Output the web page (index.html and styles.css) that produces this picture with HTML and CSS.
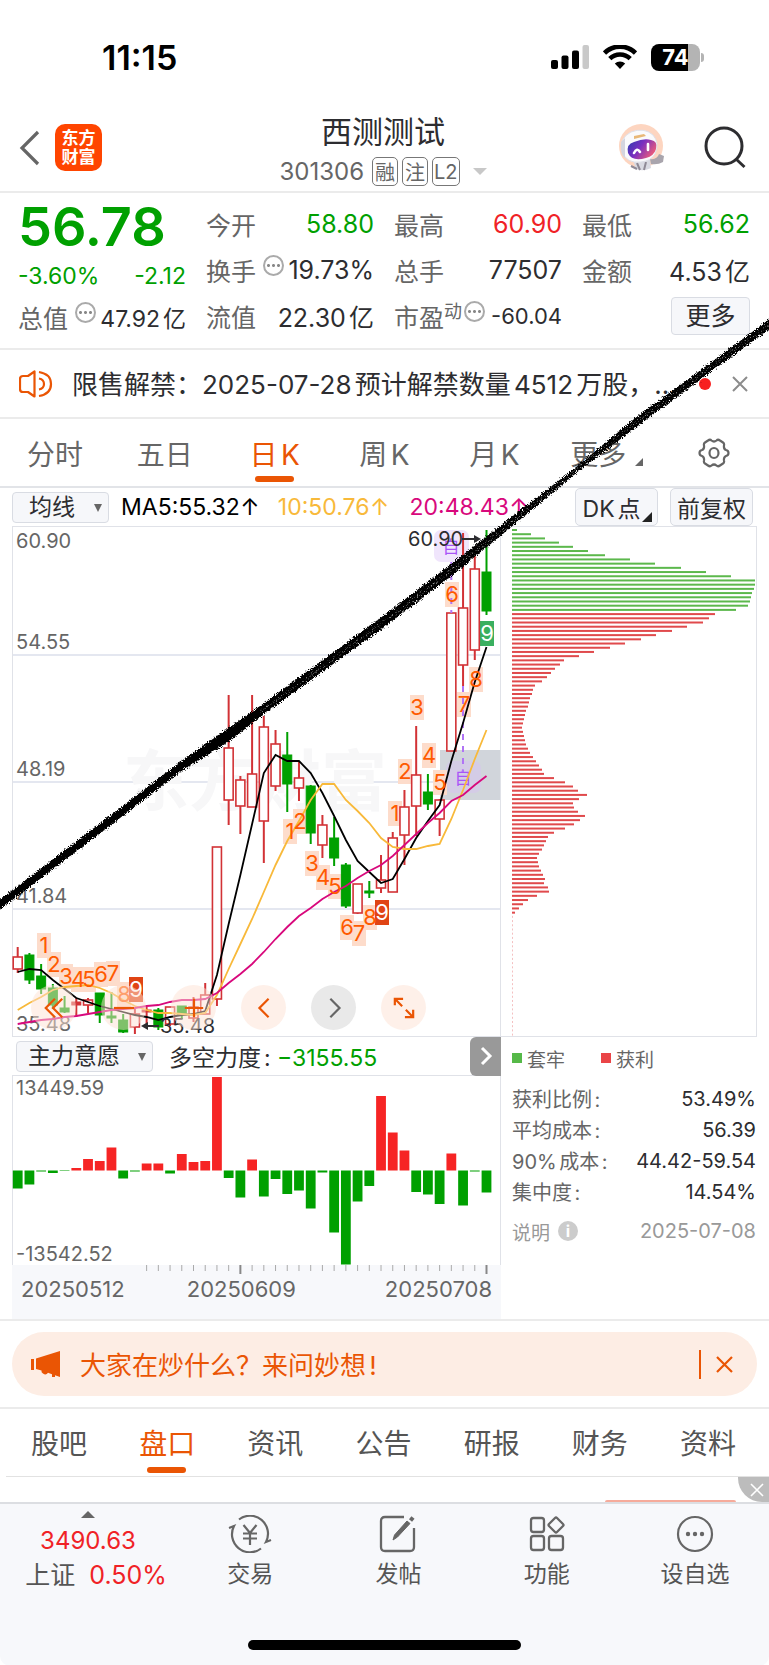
FILE: index.html
```html
<!DOCTYPE html>
<html lang="zh-CN">
<head>
<meta charset="utf-8">
<meta name="viewport" content="width=device-width, initial-scale=1">
<title>西测测试 301306</title>
<link rel="stylesheet" href="styles.css">
</head>
<body>
<div class="page">

  <div class="status">
    <span class="status-time">11:15</span>
    <div class="status-icons">
      <svg width="38" height="24" viewBox="0 0 38 24"><rect x="0" y="15" width="7" height="9" rx="2"/><rect x="10.500" y="10.500" width="7" height="13.500" rx="2"/><rect x="21" y="5.500" width="7" height="18.500" rx="2"/><rect x="31.500" y="0" width="6.500" height="24" rx="2" fill="#c9c9c9"/></svg>
      <svg width="34" height="24" viewBox="0 0 34 24"><path d="M17 24 11.800 18.500a7.500 7.500 0 0 1 10.400 0z"/><path d="M6.800 13.600a14.600 14.600 0 0 1 20.400 0M1.500 8a22 22 0 0 1 31 0" fill="none" stroke="#000" stroke-width="4.600"/></svg>
      <span class="battery"><b>74</b></span>
    </div>
  </div>

  <header class="header">
    <div class="header-left">
      <button class="icon-btn" aria-label="返回"><svg width="22" height="36" viewBox="0 0 22 36"><path d="M19 2 3 18l16 16" fill="none" stroke="#666" stroke-width="3.200"/></svg></button>
      <div class="logo"><span>东方</span><span>财富</span></div>
    </div>
    <div class="header-title">
      <h1>西测测试</h1>
      <div class="code"><span class="code-num">301306</span><i>融</i><i>注</i><i>L2</i><span class="caret"></span></div>
    </div>
    <div class="header-right">
      <svg width="46" height="48" viewBox="0 0 46 48">
        <defs><linearGradient id="visor" x1="0" y1="0" x2="1" y2=".5"><stop offset="0" stop-color="#2b3bb0"/><stop offset=".5" stop-color="#7a2fc0"/><stop offset="1" stop-color="#e85a7c"/></linearGradient></defs>
        <circle cx="22" cy="22" r="22" fill="#fdd5c0"/>
        <path d="M14 36q9-4 17 0l1 8q-8 4-15 1z" fill="#d9dae2"/>
        <path d="M18 39l3 7M27 38l-2 8M12 42l6 3" stroke="#8f8a96" stroke-width="2"/>
        <path d="M31 35q7 1 9-5l5 2-1 6q-5 3-12 2z" fill="#a9a5ad"/>
        <path d="M3 27Q0 14 12 8 25 3 34 11q7 8 2 19-4 7-14 8Q7 40 3 27z" fill="#fafafc" stroke="#dfe0e8"/>
        <path d="M2 18l4-4v20q-5-3-4-16z" fill="#d4d5df"/>
        <path d="M15 12l10-2 2 2-12 3z" fill="#e8b878"/>
        <path d="M9 29q-2-9 6-11 10-4 17-2 7 1 5 9-2 7-10 9-14 4-18-5z" fill="url(#visor)"/>
        <path d="M15 29q3-6 6-1M29 20v6" fill="none" stroke="#fff" stroke-width="2.600" stroke-linecap="round"/>
      </svg>
      <button class="icon-btn" aria-label="搜索"><svg width="44" height="44" viewBox="0 0 44 44"><circle cx="21" cy="20" r="18" fill="none" stroke="#2d2d30" stroke-width="3"/><path d="M33 33l8.500 8" stroke="#2d2d30" stroke-width="3"/></svg></button>
    </div>
  </header>

  <section class="quote">
    <div class="quote-col quote-main">
      <div class="price">56.78</div>
      <div class="row green change"><span>-3.60%</span><span>-2.12</span></div>
      <div class="row"><span class="lbl">总值</span><span class="dots"></span><span class="val">47.92亿</span></div>
    </div>
    <div class="quote-col">
      <div class="row"><span class="lbl">今开</span><span class="val green">58.80</span></div>
      <div class="row"><span class="lbl">换手</span><span class="dots"></span><span class="val">19.73%</span></div>
      <div class="row"><span class="lbl">流值</span><span class="val">22.30亿</span></div>
    </div>
    <div class="quote-col">
      <div class="row"><span class="lbl">最高</span><span class="val red">60.90</span></div>
      <div class="row"><span class="lbl">总手</span><span class="val">77507</span></div>
      <div class="row"><span class="lbl">市盈<sup>动</sup></span><span class="dots dots-tight"></span><span class="val val-small">-60.04</span></div>
    </div>
    <div class="quote-col">
      <div class="row"><span class="lbl">最低</span><span class="val green">56.62</span></div>
      <div class="row"><span class="lbl">金额</span><span class="val">4.53亿</span></div>
      <div class="row"><button class="more">更多</button></div>
    </div>
  </section>

  <section class="notice">
    <svg width="34" height="28" viewBox="0 0 34 28" fill="none" stroke="#ea5504" stroke-width="2.200"><path d="M15.500 1.500v25L9 22H4q-3 0-3-3V9q0-3 3-3h5z" stroke-linejoin="round"/><path d="M20 8.500q5 1 5 5.500t-5 5.500M20 2q12 2 12 12T20 26"/></svg>
    <p>限售解禁：2025-07-28预计解禁数量4512万股，...</p>
    <span class="dot"></span>
    <button class="icon-btn" aria-label="关闭"><svg width="16" height="16" viewBox="0 0 16 16"><path d="M1 1l14 14M15 1 1 15" stroke="#8c8c8c" stroke-width="2"/></svg></button>
  </section>

  <nav class="periods">
    <button>分时</button><button>五日</button><button class="on">日K</button><button>周K</button><button>月K</button><button class="has-corner">更多</button>
    <button aria-label="设置"><svg width="32" height="30" viewBox="0 0 32 30" fill="none" stroke="#666" stroke-width="2.200"><path d="M10 2.500Q12 1 13.500 2.500q2.500 2 5 0Q20 1 22 2.500l3 2q1.500 1 1 3-.5 3.500 2 4.500 2.500.5 2.500 3t-2.500 3q-2.500 1-2 4.500.500 2-1 3l-3 2q-2 1.500-3.500 0-2.500-2-5 0Q12 29 10 27.500l-3-2q-1.500-1-1-3Q6.500 19 4 18q-2.500-.5-2.500-3T4 12q2.500-1 2-4.500-.5-2 1-3z"/><ellipse cx="16" cy="15" rx="4.500" ry="5"/></svg></button>
  </nav>

  <section class="indicators">
    <span class="picker"><select aria-label="指标"><option>均线</option></select></span>
    <span class="ma">MA5:55.32<em>↑</em></span>
    <span class="ma ma10">10:50.76<em>↑</em></span>
    <span class="ma ma20">20:48.43<em>↑</em></span>
    <button class="tool tool-corner">DK点</button>
    <button class="tool">前复权</button>
  </section>

  <section class="charts">
    <div class="kline">
      <svg id="kline" viewBox="1 1 487 509"></svg>
      <div class="kline-tools">
        <button aria-label="最早"><svg viewBox="0 0 24 24"><path d="M13 2 3 12l10 10M21 2 11 12l10 10"/></svg></button>
        <button aria-label="缩小"><svg viewBox="0 0 24 24"><path d="M1 12h22"/></svg></button>
        <button aria-label="放大"><svg viewBox="0 0 24 24"><path d="M2 12h20M12 2v20"/></svg></button>
        <button aria-label="向左"><svg viewBox="0 0 24 24"><path d="M17 2 7 12l10 10"/></svg></button>
        <button class="grey" aria-label="向右"><svg viewBox="0 0 24 24"><path d="M8 2l10 10L8 22"/></svg></button>
        <button aria-label="全屏"><svg viewBox="0 0 24 24"><path d="M2 9V2h9M2 2l8 8M22 14v8h-9M22 22l-8-8"/></svg></button>
      </div>
    </div>
    <div class="chips"><svg id="chips" viewBox="0 0 244 509"></svg></div>

    <div class="force">
      <div class="force-head">
        <span class="picker picker-wide"><select aria-label="副图指标"><option>主力意愿</option></select></span>
        <span class="force-text">多空力度: <b>−3155.55</b></span>
        <button class="force-next" aria-label="收起"><svg width="14" height="20" viewBox="0 0 14 20"><path d="M3 2l8 8-8 8" fill="none" stroke="#fff" stroke-width="3"/></svg></button>
      </div>
      <div class="force-plot"><svg id="force" viewBox="1 0 487 189"></svg></div>
      <div class="axis">
        <svg id="ticks" viewBox="0 0 489 10"></svg>
        <div class="dates"><span>20250512</span><span>20250609</span><span>20250708</span></div>
      </div>
    </div>
    <div class="cost">
      <div class="legend"><span class="key key-green">套牢</span><span class="key key-red">获利</span></div>
      <dl>
        <div><dt>获利比例:</dt><dd>53.49%</dd></div>
        <div><dt>平均成本:</dt><dd>56.39</dd></div>
        <div><dt>90%成本:</dt><dd>44.42-59.54</dd></div>
        <div><dt>集中度:</dt><dd>14.54%</dd></div>
      </dl>
      <div class="cost-foot"><span>说明</span><span class="info">i</span><time>2025-07-08</time></div>
    </div>
  </section>

  <section class="banner-wrap">
    <div class="banner">
      <svg width="30" height="26" viewBox="0 0 30 26" fill="#ea5504"><path d="M0 8h3v11H0zM5 7.500 29 0v26l-5-1.800V26h-3v-2.800l-4-1.400q-2 3-5 .7-2-1-1.500-3L5 18z"/></svg>
      <a href="#ask">大家在炒什么？来问妙想!</a>
      <span class="banner-bar"></span>
      <button class="icon-btn" aria-label="关闭"><svg width="17" height="17" viewBox="0 0 17 17"><path d="M1 1l15 15M16 1 1 16" stroke="#ea5504" stroke-width="2.200"/></svg></button>
    </div>
  </section>

  <nav class="tabs">
    <button>股吧</button><button class="on">盘口</button><button>资讯</button><button>公告</button><button>研报</button><button>财务</button><button>资料</button>
  </nav>

  <div class="peek">
    <span class="peek-line"></span>
    <button aria-label="关闭"><svg width="14" height="14" viewBox="0 0 14 14"><path d="M1 1l12 12M13 1 1 13" stroke="#fff" stroke-width="1.600"/></svg></button>
  </div>

  <footer class="bottom">
    <div class="bottom-row">
      <div class="index"><span class="up"></span><span class="red">3490.63</span><span class="index-name">上证<b class="red">0.50%</b></span></div>
      <button><svg width="44" height="38" viewBox="0 0 44 38" fill="none" stroke="#666" stroke-width="2.200"><path d="M11 4.500A18 18 0 0 1 38 27l5-2M33 33.500A18 18 0 0 1 6 11l-5 2"/><path d="M15.500 10 22 18l6.500-8M15 18.500h14M15 23.500h14M22 18v12"/></svg><span>交易</span></button>
      <button><svg width="38" height="38" viewBox="0 0 38 38" fill="none" stroke="#666" stroke-width="2.300"><path d="M25 2H6Q2 2 2 6v26q0 4 4 4h25q4 0 4-4V13"/><path d="M14 25l1.500-5L28 6l3 2.500L18.500 22z" fill="#666" stroke-width="1"/><path d="M31.500 5.500 34 2.500" stroke-width="4"/></svg><span>发帖</span></button>
      <button><svg width="36" height="36" viewBox="0 0 36 36" fill="none" stroke="#666" stroke-width="2.300"><rect x="2" y="2" width="13" height="14" rx="2.500"/><rect x="2" y="20" width="13" height="14" rx="2.500"/><rect x="20" y="20" width="14" height="14" rx="2.500"/><path d="M26 2q1-1 2 0l6 6q1 1 0 2l-6 6q-1 1-2 0l-6-6q-1-1 0-2z"/></svg><span>功能</span></button>
      <button><svg width="38" height="38" viewBox="0 0 38 38"><circle cx="19" cy="19" r="17" fill="none" stroke="#666" stroke-width="2.200"/><g fill="#666"><circle cx="12" cy="19" r="2.200"/><circle cx="19" cy="19" r="2.200"/><circle cx="26" cy="19" r="2.200"/></g></svg><span>设自选</span></button>
    </div>
    <div class="home"></div>
  </footer>

  <svg class="scribble" viewBox="0 0 769 1665" aria-hidden="true">
    <defs>
      <filter id="rough" x="-5%" y="-5%" width="110%" height="110%">
        <feTurbulence type="fractalNoise" baseFrequency=".85" numOctaves="3" seed="4" result="n"/>
        <feDisplacementMap in="SourceGraphic" in2="n" scale="6" xChannelSelector="R" yChannelSelector="G"/>
        <feGaussianBlur stdDeviation=".4"/>
      </filter>
      <filter id="grain" x="-5%" y="-5%" width="110%" height="110%">
        <feTurbulence type="fractalNoise" baseFrequency=".8" numOctaves="2" seed="9"/>
        <feColorMatrix values="0 0 0 0 .4  0 0 0 0 .4  0 0 0 0 .4  4 0 0 0 -2.200"/>
        <feComposite in2="SourceGraphic" operator="in"/>
      </filter>
    </defs>
    <path d="M-6 904 90 831 180 762 230 727 260 706 383 616 450 565 510 518 570 472 639 415 705 367 775 315V325L705 376 639 425 580 470 510 528 450 577 383 628 260 717 230 741 180 772 90 841-6 914z" filter="url(#rough)"/>
    <path d="M260 710 383 620 450 569 510 521 639 418 775 318V322L639 422 510 526 450 574 383 625 260 714z" filter="url(#grain)"/>
  </svg>
</div>
<script src="charts.js"></script>
</body>
</html>
```
FILE: styles.css
```css
* { box-sizing: border-box; }
body { margin: 0; background: #fff; color: #2d2d30; font-family: Inter, "Noto Sans CJK SC", sans-serif; font-weight: 400; text-autospace: normal; }
button, select { font: inherit; color: inherit; text-autospace: inherit; border: 0; background: none; padding: 0; margin: 0; }
b, i, em { font-weight: inherit; font-style: normal; }
svg { display: block; flex: none; }
.page { position: relative; overflow: hidden; }
.green { color: #00a000; }
.red { color: #f02226; }
.icon-btn { display: flex; }

/* status bar */
.status { display: flex; justify-content: space-between; align-items: center; height: 104px; padding: 10px 69px 0 102px; color: #000; }
.status-time { font-size: 34px; font-weight: 600; }
.status-icons { display: flex; align-items: center; gap: 14px; }
.battery { position: relative; display: flex; align-items: center; justify-content: center; width: 49px; height: 27px; border-radius: 8px; background: linear-gradient(90deg, #000 75%, #b4b4b4 75%); color: #fff; font-size: 22px; }
.battery b { font-weight: 700; }
.battery::after { content: ""; position: absolute; right: -4px; top: 9px; width: 3px; height: 9px; border-radius: 0 3px 3px 0; background: #b4b4b4; }

/* header */
.header { display: grid; grid-template-columns: 1fr auto 1fr; align-items: center; height: 89px; padding: 0 22px 0 19px; border-bottom: 2px solid #ebebeb; }
.header-left { display: flex; align-items: center; gap: 14px; }
.logo { display: flex; flex-direction: column; align-items: center; justify-content: center; width: 47px; height: 47px; border-radius: 10px; background: #ff4500; color: #fff; font-size: 17px; font-weight: 700; line-height: 19px; }
.header-title { padding-top: 6px; text-align: center; }
.header h1 { margin: 0; font-size: 31px; line-height: 42px; font-weight: 400; }
.code { display: flex; align-items: center; justify-content: center; gap: 4px; height: 38px; color: #666; font-size: 22px; }
.code-num { margin-right: 4px; font-size: 24px; }
.code i { display: flex; align-items: center; justify-content: center; height: 29px; min-width: 26px; padding: 0 1px; border: 1px solid #777; border-radius: 5px; font-size: 20px; }
.caret { margin-left: 9px; border: 7px solid transparent; border-top-color: #c8c8c8; border-bottom: 0; }
.header-right { display: flex; align-items: center; justify-content: flex-end; gap: 38px; }

/* quote */
.quote { display: grid; grid-template-columns: repeat(4, 1fr); gap: 20px; height: 157px; padding: 8px 19px 0 18px; border-bottom: 2px solid #ebebeb; font-size: 25px; }
.row { display: flex; align-items: center; height: 46px; white-space: nowrap; }
.lbl { color: #666; font-size: 25px; }
.lbl sup { font-size: 18px; line-height: 0; }
.val { margin-left: auto; }
.val-small { font-size: 22px; }
.price { height: 57px; color: #00a000; font-size: 54px; line-height: 52px; font-weight: 600; }
.change { height: 36px; justify-content: space-between; font-size: 23px; }
.quote-main .val { font-size: 23px; }
.dots { width: 21px; height: 21px; margin: 0 0 10px 7px; border: 2px solid #aaa; border-radius: 50%; background: radial-gradient(circle, #888 1px, transparent 2px) 1px 6px / 5px 5px repeat-x; }
.dots-tight { margin-left: 2px; }
.more { margin-left: auto; width: 79px; height: 38px; border: 1px solid #d9dce3; border-radius: 4px; background: #f6f7fa; font-size: 25px; line-height: 34px; }

/* notice */
.notice { display: flex; align-items: center; height: 69px; padding: 0 21px 0 19px; border-bottom: 2px solid #ebebeb; font-size: 26px; }
.notice p { flex: 1; margin: 0 0 2px 19px; white-space: nowrap; }
.dot { width: 12px; height: 12px; margin: 0 21px 0 16px; border-radius: 50%; background: #f82020; }

/* period tabs */
.periods { display: grid; grid-template-columns: repeat(7, 1fr); height: 69px; border-bottom: 2px solid #e2e4e8; color: #666; font-size: 28px; }
.periods button, .tabs button { position: relative; display: flex; align-items: center; justify-content: center; }
.periods .on, .tabs .on { color: #ea5504; }
.on::after { content: ""; position: absolute; left: 50%; bottom: 4px; width: 39px; height: 6px; margin-left: -20px; border-radius: 3px; background: #ea5504; }
.has-corner { padding-right: 12px; }
.has-corner::after { content: ""; position: absolute; right: 16px; bottom: 20px; border: 4px solid transparent; border-right-color: #666; border-bottom-color: #666; }

/* indicator row */
.indicators { display: flex; align-items: center; height: 38px; padding: 0 16px 0 12px; font-size: 23px; white-space: nowrap; }
.picker { position: relative; display: flex; width: 97px; height: 31px; border: 1px solid #d9dce3; border-radius: 4px; background: #f6f7fa; }
.picker select { appearance: none; width: 100%; padding-left: 16px; font-size: 23px; line-height: 29px; }
.picker::after { content: ""; position: absolute; right: 6px; top: 11px; border: 4px solid transparent; border-top: 8px solid #666; border-bottom: 0; pointer-events: none; }
.picker-wide { width: 137px; }
.picker-wide select { padding-left: 11px; }
.ma { margin-left: 12px; color: #000; }
.ma em { display: inline-block; width: 20px; text-align: center; }
.ma10 { margin-left: 18px; color: #f8b93a; }
.ma20 { margin-left: 20px; color: #d8087c; }
.tool { position: relative; width: 83px; height: 38px; margin-left: 12px; border: 1px solid #d9dce3; border-radius: 5px; background: #f6f7fa; font-size: 23px; }
.ma20 + .tool { margin-left: auto; }
.tool-corner { padding-right: 10px; }
.tool-corner::after { content: ""; position: absolute; right: 5px; bottom: 3px; border: 5px solid transparent; border-right-color: #222; border-bottom-color: #222; }

/* charts */
.charts { display: grid; grid-template-columns: 489fr 256fr; padding: 0 12px; border-bottom: 2px solid #ebebeb; }
.charts svg { overflow: visible; }
.kline { position: relative; border: 1px solid #e0e2e8; }
.kline > svg, .chips svg, .force-plot svg, .axis svg { width: 100%; }
.kline-tools { position: absolute; left: 18px; bottom: 6px; display: flex; gap: 25px; }
.kline-tools button { display: grid; place-items: center; width: 45px; height: 45px; border-radius: 50%; background: rgba(253, 226, 212, .5); }
.kline-tools .grey { background: #e9e9e9; }
.kline-tools svg { width: 22px; fill: none; stroke: #ea5504; stroke-width: 2.400; }
.kline-tools .grey svg { stroke: #666; }
.chips { padding-left: 11px; border: 1px solid #e0e2e8; border-left: 0; }
.force { position: relative; }
.force-head { display: flex; align-items: center; height: 39px; padding-left: 4px; border-bottom: 1px solid #e0e2e8; font-size: 23px; }
.force-head b { color: #00a000; }
.force-text { margin-left: 16px; }
.force-next { display: grid; place-items: center; width: 31px; height: 39px; margin-left: auto; border-radius: 6px 0 0 6px; background: #999; }
.force-plot { border: solid #e0e2e8; border-width: 0 1px; }
.axis { height: 54px; background: #f7f8fb; }
.dates { display: flex; padding: 0 9px; color: #666; font-size: 22px; line-height: 28px; }
.dates span + span { margin-left: 62px; }
.dates span:last-child { margin-left: auto; }
.cost { padding: 5px 1px 0 11px; color: #666; font-size: 20px; }
.legend { display: flex; gap: 36px; height: 32px; font-size: 19px; align-items: center; }
.key { display: flex; align-items: center; gap: 5px; }
.key::before { content: ""; width: 10px; height: 10px; background: #56b948; }
.key-red::before { background: #ea4547; }
.cost dl { margin: 9px 0 0; }
.cost dl div { display: flex; justify-content: space-between; height: 31px; align-items: center; }
.cost dd { margin: 0; color: #2d2d30; }
.cost-foot { display: flex; align-items: center; gap: 8px; height: 32px; margin-top: 8px; color: #999; font-size: 19px; }
.cost-foot time { margin-left: auto; font-size: 20px; }
.info { width: 20px; height: 20px; border-radius: 50%; background: #ccc; color: #fff; font-size: 16px; line-height: 20px; font-weight: 700; text-align: center; }

/* banner */
.banner-wrap { padding: 11px 12px; border-bottom: 2px solid #ebebeb; }
.banner { display: flex; align-items: center; height: 64px; padding: 0 24px 0 19px; border-radius: 32px; background: #fdede4; color: #ea5504; font-size: 26px; }
.banner a { flex: 1; margin-left: 19px; padding-bottom: 2px; color: inherit; text-decoration: none; }
.banner-bar { width: 2px; height: 29px; margin-right: 15px; background: #ea5504; }

/* section tabs */
.tabs { display: flex; justify-content: space-between; height: 68px; margin-left: 6px; padding: 0 33px 2px 25px; border-bottom: 1px solid #e2e2e2; color: #555; font-size: 28px; }
.tabs .on::after { bottom: 1px; }
.peek { position: relative; height: 25px; overflow: hidden; }
.peek button { position: absolute; right: 0; top: 0; display: grid; place-items: center; width: 31px; height: 25px; padding-left: 6px; border-radius: 0 0 0 24px; background: #bcbcbc; }
.peek-line { position: absolute; right: 33px; bottom: 0; width: 131px; height: 2px; border-radius: 2px 2px 0 0; background: #f6ab9b; }

/* bottom bar */
.bottom { height: 164px; padding-top: 6px; border-top: 2px solid #dcdee2; border-radius: 0 0 10px 10px; background: #f7f8fb; color: #555; }
.bottom-row { display: grid; grid-template-columns: 176px repeat(4, 1fr); }
.bottom-row button { display: flex; flex-direction: column; align-items: center; font-size: 23px; }
.bottom-row button svg { height: 38px; margin: 5px 0 4px; }
.bottom-row button span { line-height: 34px; }
.index { display: flex; flex-direction: column; align-items: center; font-size: 24px; line-height: 34px; }
.index-name { margin-left: 16px; font-size: 25px; }
.index-name b { margin-left: 11px; }
.up { margin: 1px 0 6px; border: 7px solid transparent; border-bottom-color: #666; border-top: 0; }
.home { width: 273px; height: 10px; margin: 48px auto 0; border-radius: 5px; background: #000; }

.scribble { position: absolute; left: 0; top: 0; width: 100%; pointer-events: none; }

/* chart marks */
.label { font-size: 20px; fill: #666; }
.label-dark { font-size: 20px; fill: #2d2d30; }
.mark { font-size: 22px; fill: #ff5a00; text-anchor: middle; }
.mark-inv { fill: #fff; }
.self { font-size: 17px; fill: #a855f7; text-anchor: middle; }
.watermark { font-size: 66px; font-weight: 700; fill: #f7f7f8; }
```
FILE: charts.js
```js
const NS = 'http://www.w3.org/2000/svg';
const RED = '#d23236', GREEN = '#00a000';

function add(parent, tag, attrs, text) {
  const node = document.createElementNS(NS, tag);
  for (const key in attrs) node.setAttribute(key, attrs[key]);
  if (text !== undefined) node.textContent = text;
  parent.appendChild(node);
  return node;
}

const slotX = i => 5.7 + i * 11.72;

/* direction, high, body top, body bottom, low */
const candles = [
  ['r',421,431,443,447],['g',427,429,454,458],['g',438,450,463,468],['g',458,462,479,483],['g',470,482,486,487],
  ['r',472,476,479,491],['r',472,474,479,487],['g',467,467,489,497],['g',466,490,492,497],['g',488,494,506,507],
  ['r',483,488,501,508],['r',481,484,486,498],['g',482,484,501,504],['r',481,481,498,500],['g',480,480,489,493],
  ['r',471,481,492,496],['r',457,469,488,488],['r',321,321,473,480],['r',169,222,274,299],['r',250,254,280,308],
  ['r',169,248,281,281],['r',190,201,295,337],['r',204,218,260,265],['g',206,229,258,286],['r',236,252,262,275],
  ['g',259,260,307,318],['r',289,299,319,332],['g',291,312,332,340],['g',337,339,380,382],['r',358,358,387,388],
  ['g',355,365,367,372],['r',329,354,362,367],['r',306,312,366,366],['r',264,281,309,339],['r',200,249,280,310],
  ['g',248,266,278,284],['r',273,274,293,310],['r',87,87,225,225],['r',7,82,139,160],['r',30,43,124,134],['g',4,46,85,89]
];
const averages = {
  '#000': [446,443,444,454,463,472,476,480,483,486,489,491,494,491,489,488,485,449,398,349,298,247,229,235,235,247,267,290,314,335,346,357,353,333,312,295,279,235,197,156,121],
  '#f8b93a': [484,477,471,464,461,460,459,462,467,474,480,484,487,487,488,489,487,469,443,418,393,366,339,315,295,274,258,258,274,285,297,312,321,323,323,320,318,293,264,233,204],
  '#d8087c': [498,496,494,493,491,490,488,486,484,483,482,480,479,476,474,474,473,467,457,448,438,426,413,401,390,382,373,366,360,352,345,339,330,319,308,297,287,275,269,259,250]
};
/* x, y, digit, optional solid background */
const marks = [
  [32,419,1],[42,438,2],[54,450,3],[66,453,4],[77,453,5],[89,448,6],[101,447,7],[112,468,8],[124,463,9,'#e04414'],
  [278,305,1],[288,295,2],[300,337,3],[311,351,4],[323,360,5],[335,401,6],[347,407,7],[358,391,8],[370,386,9,'#e04414'],
  [383,287,1],[393,245,2],[405,181,3],[417,229,4],[428,256,5],[440,68,6],[452,178,7],[464,153,8],[475,107,9,'#3aaf5f']
];

function drawKline() {
  const svg = document.getElementById('kline');
  [129, 256, 383].forEach(y => add(svg, 'path', { d: `M1 ${y}H488`, stroke: '#e4e7f0', 'stroke-width': 2 }));
  add(svg, 'text', { class: 'watermark', x: 111, y: 279 }, '东方财富');
  add(svg, 'rect', { x: 428, y: 224, width: 60, height: 50, fill: '#d1d5db' });
  [[422, 4, 439], [434, 235, 451]].forEach(([x, y, cx]) => {
    add(svg, 'rect', { x, y, width: 35, height: 32, rx: 7, fill: '#d9bdf8', 'fill-opacity': .4 });
    add(svg, 'text', { class: 'self', x: cx, y: y + 23 }, '自');
  });
  [[60.90, 22], [54.55, 123], [48.19, 250], [41.84, 377], [35.48, 505]].forEach(([v, y]) =>
    add(svg, 'text', { class: 'label', x: 4, y }, v.toFixed(2)));
  marks.forEach(([x, y, , bg]) => add(svg, 'rect', { x: x - 7, y: y - 12, width: 14, height: 25, fill: bg || '#fddccb' }));
  candles.forEach(([dir, hi, top, bot, low], i) => {
    const x = slotX(i), c = dir === 'r' ? RED : GREEN, hollow = dir === 'r' && bot - top > 3;
    add(svg, 'path', { d: `M${x} ${hi}V${top}M${x} ${bot}V${low}`, stroke: c, 'stroke-width': 2 });
    add(svg, 'rect', { x: x - 4.5, y: top, width: 9, height: bot - top, fill: hollow ? '#fff' : c, stroke: c, 'stroke-width': hollow ? 1.6 : 1 });
  });
  add(svg, 'path', { d: 'M439.300 36V87M451 160V246', stroke: '#b074f5', 'stroke-width': 2, 'stroke-dasharray': '6 6' });
  for (const color in averages) {
    const points = averages[color].map((y, i) => `${slotX(i)},${y}`).join(' ');
    add(svg, 'polyline', { points, fill: 'none', stroke: color, 'stroke-width': 1.8 });
  }
  marks.forEach(([x, y, n, bg]) => add(svg, 'text', { class: bg ? 'mark mark-inv' : 'mark', x, y: y + 8 }, n));
  add(svg, 'text', { class: 'label-dark', x: 396, y: 20 }, '60.90');
  add(svg, 'text', { class: 'label-dark', x: 148, y: 507 }, '35.48');
  add(svg, 'path', { d: 'M450 13h14M147 500h-14', stroke: '#2d2d30', 'stroke-width': 2 });
  add(svg, 'path', { d: 'M469 13l-7-4v8zM129 500l7-4v8z', fill: '#2d2d30' });
}

const trapped = [5,19,33,47,61,76,93,118,143,169,194,219,243,243,242,240,239,238,236,224];
const profit = [203,197,191,175,160,144,129,113,98,82,67,52,48,43,39,35,30,23,21,20,18,17,16,14,13,12,11,10,11,12,13,14,16,18,21,24,27,30,32,42,53,61,66,75,67,61,62,66,73,68,62,53,42,36,34,32,30,27,25,26,27,29,31,33,32,36,37,25,16,11,7,3];

function drawChips() {
  const svg = document.getElementById('chips');
  const all = trapped.concat(profit);
  for (let i = 0; i < 121; i++) {
    const width = all[i] || 1;
    add(svg, 'rect', { x: 0, y: 2 + i * 4.205, width, height: 2, fill: i < trapped.length ? '#5cb84c' : '#e04a4c', 'fill-opacity': i < all.length ? 1 : .35 });
  }
}

const force = [-18,-14,-1,-2.5,-.5,2.5,11.5,9.5,23,-8,-1,7,7,-3,16.5,8.5,9.5,93.5,-7.5,-27,11,-26,-8.5,-23.5,-20,-38,-2,-62,-94,-31,-15.5,74.5,38,20,-21.5,-24,-33.5,17,-35,-1,-22];

function drawForce() {
  const svg = document.getElementById('force');
  force.forEach((v, i) => add(svg, 'rect', { x: slotX(i) - 4.9, y: v > 0 ? 94.5 - v : 94.5, width: 9.8, height: Math.abs(v), fill: v > 0 ? '#f62424' : GREEN }));
  add(svg, 'text', { class: 'label', x: 4, y: 19 }, '13449.59');
  add(svg, 'text', { class: 'label', x: 4, y: 185 }, '-13542.52');
  const ticks = document.getElementById('ticks');
  for (let i = 11; i <= 40; i++) {
    const major = i === 19 || i === 40;
    add(ticks, 'path', { d: `M${slotX(i)} 0v${major ? 9 : 6}`, stroke: major ? '#888' : '#aaa', 'stroke-width': major ? 2 : 1 });
  }
}

drawKline();
drawChips();
drawForce();
```
